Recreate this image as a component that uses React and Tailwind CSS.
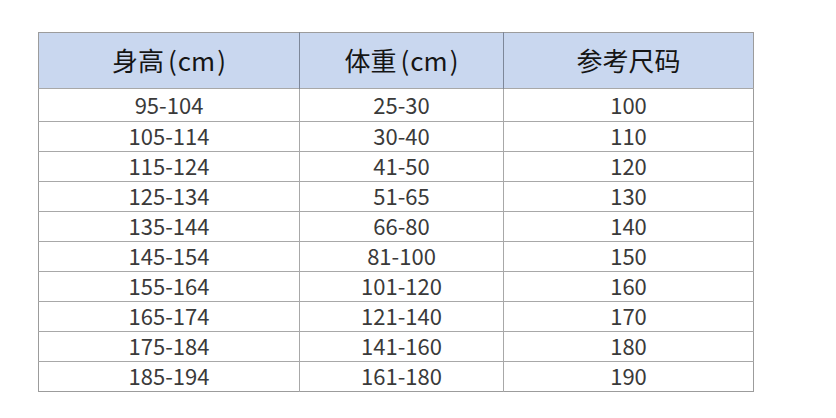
import React from 'react';

const rows = [
  ['95-104', '25-30', '100'],
  ['105-114', '30-40', '110'],
  ['115-124', '41-50', '120'],
  ['125-134', '51-65', '130'],
  ['135-144', '66-80', '140'],
  ['145-154', '81-100', '150'],
  ['155-164', '101-120', '160'],
  ['165-174', '121-140', '170'],
  ['175-184', '141-160', '180'],
  ['185-194', '161-180', '190'],
];

const font = { fontFamily: '"Noto Sans CJK SC", "Noto Sans", sans-serif' };

// заголовок с единицей измерения
const Head = ({ label }) => (
  <>
    {label}
    <span className="ml-[4px]">(</span>
    <span className="ml-[1px]">cm</span>
    <span className="ml-[2px]">)</span>
  </>
);

const App = () => {
  return (
    <div className="w-[836px] h-[418px] bg-white pt-[32px] pl-[38px]" style={font}>
      <table className="w-[715px] border-collapse border border-[#9c9c9c] table-fixed">
        <colgroup>
          <col className="w-[261px]" />
          <col className="w-[204px]" />
          <col className="w-[250px]" />
        </colgroup>
        <thead>
          <tr className="h-[56px] bg-[#c9d7ef] text-[#151515] text-[26px]">
            <th className="font-normal border-r border-[#7d8799] p-0 pb-[2px]">
              <Head label="身高" />
            </th>
            <th className="font-normal border-r border-[#7d8799] p-0 pb-[2px]">
              <Head label="体重" />
            </th>
            <th className="font-normal p-0 pb-[2px]">参考尺码</th>
          </tr>
        </thead>
        <tbody className="text-[22px] text-[#3a3a3a]">
          {rows.map((r, i) => (
            <tr key={i} className={i === 0 ? 'h-[33px]' : 'h-[30px]'}>
              <td className="text-center border-t border-r border-[#a8a8a8] p-0 pb-[3px] leading-none">{r[0]}</td>
              <td className="text-center border-t border-r border-[#a8a8a8] p-0 pb-[3px] leading-none">{r[1]}</td>
              <td className="text-center border-t border-[#a8a8a8] p-0 pb-[3px] leading-none">{r[2]}</td>
            </tr>
          ))}
        </tbody>
      </table>
    </div>
  );
};

export default App;
